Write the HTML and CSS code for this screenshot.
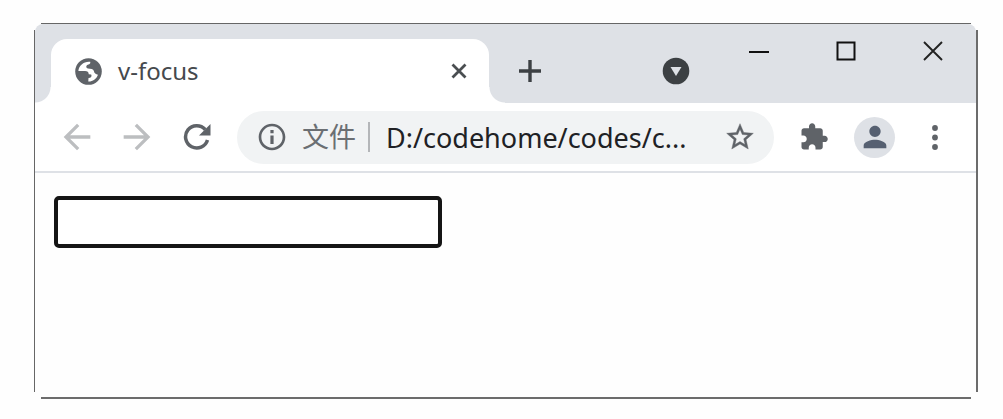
FILE: index.html
```html
<!DOCTYPE html>
<html lang="zh-CN">
<head>
<meta charset="utf-8">
<title>v-focus</title>
<link rel="stylesheet" href="styles.css">
</head>
<body>
<div class="window">
  <header class="titlebar">
    <div class="tab">
      <svg class="favicon" viewBox="0 0 24 24" aria-hidden="true"><circle cx="12" cy="12" r="11.800" fill="#5f6368"/><path fill="#fff" d="M3 11.600C3.500 6.500 8 2.800 13.500 3.400C14 5.500 12.500 5.600 10.800 6.200C9.500 7 9.800 9 11.500 9.300C14 9.500 16.300 9.600 16.800 11.500C17 13.800 18.500 14.300 20.400 14.800C19 18.800 15.500 21 11.800 20.800L12 17.800C14.300 17.800 15.200 16 14.400 14.600L12.200 14.500C12.200 12.500 11 11.700 9 11.600Z"/></svg>
      <span class="tab-title">v-focus</span>
      <button class="tab-close" aria-label="关闭标签页"><svg width="16" height="16" viewBox="0 0 16 16"><path d="M1.500 1.500l13 13M14.500 1.500l-13 13" stroke="#4a4e51" stroke-width="2.800"/></svg></button>
    </div>
    <button class="icon-button" aria-label="新标签页"><svg width="24" height="24" viewBox="0 0 24 24"><path d="M12 1v22M1 12h22" stroke="#3c4043" stroke-width="3.400"/></svg></button>
    <button class="icon-button tab-search" aria-label="搜索标签页"><svg width="28" height="28" viewBox="0 0 28 28"><circle cx="14" cy="14" r="13.300" fill="#3c4043"/><path d="M8.500 10h11L14 19z" fill="#dee1e6"/></svg></button>
    <div class="controls">
      <button class="control" aria-label="最小化"><svg width="20" height="20" viewBox="0 0 20 20"><path d="M0 11h20" stroke="#111" stroke-width="2"/></svg></button>
      <button class="control" aria-label="最大化"><svg width="20" height="20" viewBox="0 0 20 20"><path d="M1.500 1.500h17v17h-17z" fill="none" stroke="#111" stroke-width="2"/></svg></button>
      <button class="control" aria-label="关闭"><svg width="20" height="20" viewBox="0 0 20 20"><path d="M1 1l18 18M19 1L1 19" stroke="#222" stroke-width="1.900"/></svg></button>
    </div>
  </header>
  <nav class="toolbar">
    <button class="icon-button" aria-label="后退"><svg width="40" height="40" viewBox="0 0 24 24"><path fill="#bcbec0" d="M20 11H7.830l5.590-5.590L12 4l-8 8 8 8 1.410-1.410L7.830 13H20v-2z"/></svg></button>
    <button class="icon-button" aria-label="前进"><svg width="40" height="40" viewBox="0 0 24 24"><path fill="#bcbec0" d="M12 4l-1.410 1.410L16.170 11H4v2h12.170l-5.580 5.590L12 20l8-8z"/></svg></button>
    <button class="icon-button" aria-label="重新加载"><svg width="28" height="28" viewBox="0 0 28 28"><path d="M24.500 17A11.200 11.200 0 1 1 22.200 6.500" fill="none" stroke="#5f6368" stroke-width="3.500"/><path d="M27.500 1v11.500H16z" fill="#5f6368"/></svg></button>
    <div class="omnibox">
      <svg class="omnibox-icon" viewBox="0 0 24 24" aria-hidden="true"><path fill="#5f6368" d="M10.800 6.800h2.400v2.400h-2.400zm0 4h2.400v6.400h-2.400zM12 2C6.480 2 2 6.480 2 12s4.480 10 10 10 10-4.480 10-10S17.520 2 12 2zm0 18c-4.410 0-8-3.590-8-8s3.590-8 8-8 8 3.590 8 8-3.590 8-8 8z"/></svg>
      <label class="scheme" for="address">文件</label>
      <input class="address" id="address" type="text" value="D:/codehome/codes/c...">
      <button class="star" aria-label="为此页添加书签"><svg class="omnibox-icon" viewBox="0 0 24 24"><path fill="#5f6368" stroke="#5f6368" stroke-width=".3" d="M22 9.240l-7.190-.62L12 2 9.190 8.630 2 9.240l5.460 4.730L5.820 21 12 17.270 18.180 21l-1.630-7.030L22 9.240zM12 15.400l-3.760 2.270 1-4.280-3.320-2.880 4.380-.38L12 6.100l1.710 4.040 4.380.38-3.320 2.880 1 4.280L12 15.400z"/></svg></button>
    </div>
    <button class="icon-button" aria-label="扩展程序"><svg width="30" height="30" viewBox="0 0 24 24"><path fill="#5f6368" d="M20.500 11H19V7c0-1.100-.9-2-2-2h-4V3.500C13 2.120 11.880 1 10.500 1S8 2.120 8 3.500V5H4c-1.100 0-1.990.9-1.990 2v3.800H3.500c1.490 0 2.700 1.210 2.700 2.700s-1.210 2.700-2.700 2.700H2V20c0 1.100.9 2 2 2h3.800v-1.500c0-1.490 1.210-2.700 2.700-2.700 1.490 0 2.700 1.210 2.700 2.700V22H17c1.100 0 2-.9 2-2v-4h1.500c1.380 0 2.500-1.120 2.500-2.500S21.880 11 20.500 11z"/></svg></button>
    <button class="icon-button avatar" aria-label="个人资料"><svg width="34" height="34" viewBox="0 0 24 24"><path fill="#566071" d="M12 12c2.210 0 4-1.790 4-4s-1.790-4-4-4-4 1.790-4 4 1.790 4 4 4zm0 2c-2.670 0-8 1.340-8 4v2h16v-2c0-2.660-5.330-4-8-4z"/></svg></button>
    <button class="icon-button" aria-label="菜单"><svg width="8" height="28" viewBox="0 0 8 28"><g fill="#5f6368"><circle cx="4" cy="5" r="2.900"/><circle cx="4" cy="14.500" r="2.900"/><circle cx="4" cy="24" r="2.900"/></g></svg></button>
  </nav>
  <main class="page">
    <input class="focus-input" type="text" aria-label="v-focus">
  </main>
</div>
</body>
</html>
```
FILE: styles.css
```css
* { box-sizing: border-box; }
body {
  margin: 0;
  padding: 23px 25px 20px 34px;
  min-height: 100vh;
  display: flex;
  background: #fefefe;
  font-family: "Noto Sans", "Noto Sans CJK SC", sans-serif;
}
button {
  padding: 0;
  border: 0;
  background: none;
  display: flex;
  align-items: center;
  justify-content: center;
}
svg { display: block; flex: none; }

.window {
  flex: 1;
  min-width: 0;
  display: flex;
  flex-direction: column;
  padding: 1px 2px 2px 1px;
  background:
    linear-gradient(#666, #666) center top / calc(100% - 14px) 1px no-repeat,
    linear-gradient(#6c6c6c, #6c6c6c) center bottom / calc(100% - 14px) 2px no-repeat,
    linear-gradient(#666, #666) left center / 1px calc(100% - 14px) no-repeat,
    linear-gradient(#6c6c6c, #6c6c6c) right center / 2px calc(100% - 14px) no-repeat;
}

.titlebar {
  display: flex;
  align-items: flex-end;
  height: 79px;
  padding-left: 16px;
  background: #dee1e6;
  border-radius: 8px 8px 0 0;
}
.tab {
  position: relative;
  flex: 0 1 438px;
  min-width: 0;
  height: 64px;
  margin-right: 21px;
  padding: 0 22px 0 24px;
  display: flex;
  align-items: center;
  background: #fff;
  border-radius: 16px 16px 0 0;
}
.tab::before,
.tab::after {
  content: "";
  position: absolute;
  bottom: 0;
  width: 16px;
  height: 16px;
}
.tab::before {
  right: 100%;
  background: radial-gradient(circle at 0 0, transparent 15px, #fff 16px);
}
.tab::after {
  left: 100%;
  background: radial-gradient(circle at 100% 0, transparent 15px, #fff 16px);
}
.favicon { width: 27px; height: 27px; }
.tab-title {
  flex: 1;
  margin-left: 16px;
  font-size: 24px;
  line-height: 32px;
  color: #45494d;
}
.icon-button {
  flex: none;
  width: 40px;
  height: 64px;
}
.tab-search { margin: 0 19px 0 auto; }
.controls {
  display: flex;
  align-self: flex-start;
}
.control {
  width: 87px;
  height: 54px;
}

.toolbar {
  display: flex;
  align-items: center;
  gap: 20px;
  height: 70px;
  padding: 0 21px 0 22px;
  background: #fff;
  border-bottom: 2px solid #dee1e6;
}
.omnibox {
  flex: 1;
  min-width: 0;
  display: flex;
  align-items: center;
  height: 53px;
  padding: 0 18px 0 19px;
  background: #f1f3f4;
  border-radius: 27px;
}
.omnibox-icon { width: 32px; height: 32px; }
.scheme {
  flex: none;
  margin-left: 14px;
  padding-right: 12px;
  border-right: 2px solid #b4b6b9;
  font-size: 27px;
  line-height: 30px;
  color: #6b6f73;
}
.address {
  flex: 1;
  min-width: 0;
  height: 40px;
  margin: 0;
  padding: 0 0 0 16px;
  border: 0;
  outline: 0;
  background: none;
  font: 27px "Noto Sans", sans-serif;
  color: #202124;
}
.avatar {
  height: 41px;
  width: 41px;
  background: #dee1e6;
  border-radius: 50%;
}

.page {
  flex: 1;
  padding: 23px 19px;
}
.focus-input {
  display: block;
  width: 388px;
  max-width: 100%;
  height: 52px;
  padding: 4px 8px;
  border: 4px solid #151515;
  border-radius: 5px;
  outline: 0;
  background: #fff;
  font: 27px "Noto Sans", sans-serif;
}
```
